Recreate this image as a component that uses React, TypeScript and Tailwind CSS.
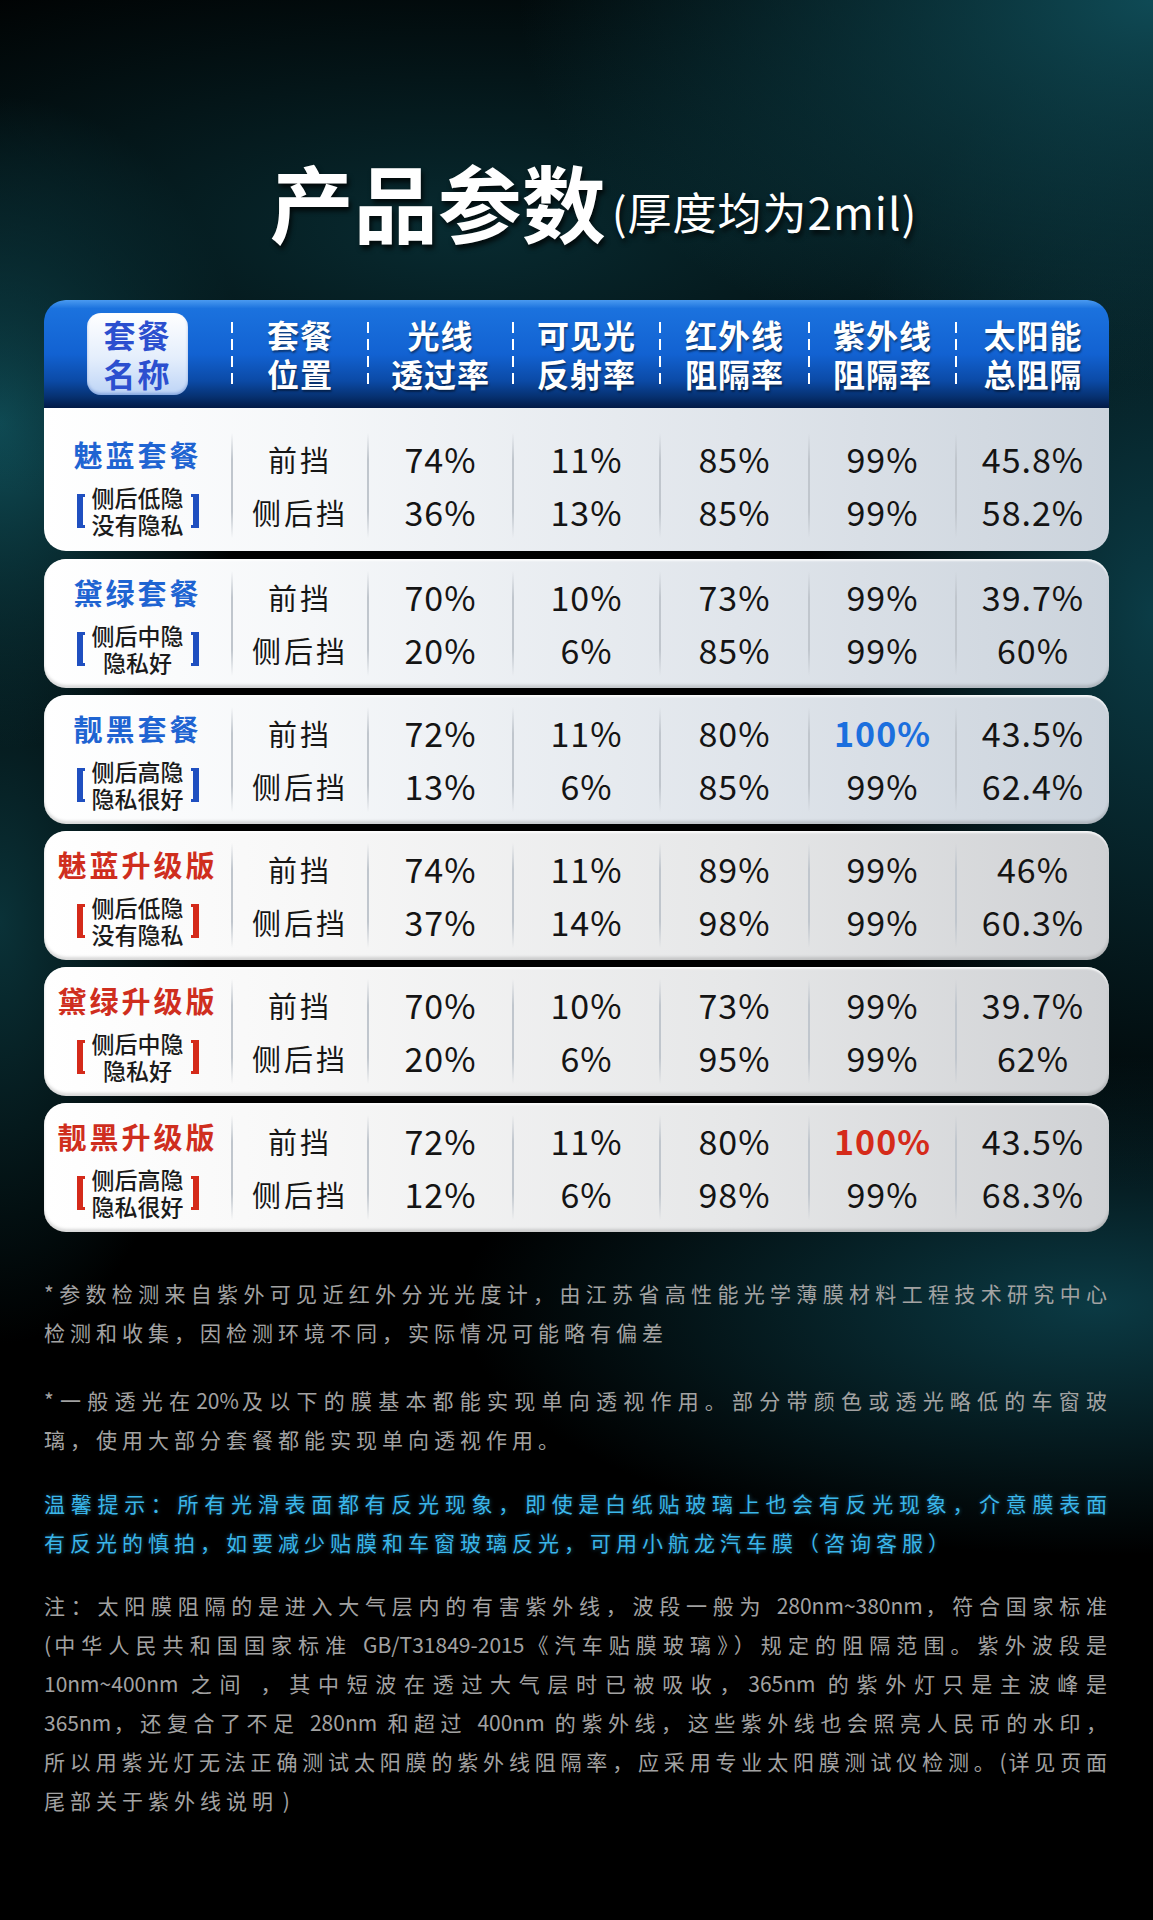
import React from "react";

type Row = {
  name: string;
  red: boolean;
  sub: [string, string];
  vals: [string, string][];
  hi?: number;
};

const rows: Row[] = [
  { name: "魅蓝套餐", red: false, sub: ["侧后低隐", "没有隐私"], vals: [["74%", "36%"], ["11%", "13%"], ["85%", "85%"], ["99%", "99%"], ["45.8%", "58.2%"]] },
  { name: "黛绿套餐", red: false, sub: ["侧后中隐", "隐私好"], vals: [["70%", "20%"], ["10%", "6%"], ["73%", "85%"], ["99%", "99%"], ["39.7%", "60%"]] },
  { name: "靓黑套餐", red: false, sub: ["侧后高隐", "隐私很好"], vals: [["72%", "13%"], ["11%", "6%"], ["80%", "85%"], ["100%", "99%"], ["43.5%", "62.4%"]], hi: 3 },
  { name: "魅蓝升级版", red: true, sub: ["侧后低隐", "没有隐私"], vals: [["74%", "37%"], ["11%", "14%"], ["89%", "98%"], ["99%", "99%"], ["46%", "60.3%"]] },
  { name: "黛绿升级版", red: true, sub: ["侧后中隐", "隐私好"], vals: [["70%", "20%"], ["10%", "6%"], ["73%", "95%"], ["99%", "99%"], ["39.7%", "62%"]] },
  { name: "靓黑升级版", red: true, sub: ["侧后高隐", "隐私很好"], vals: [["72%", "12%"], ["11%", "6%"], ["80%", "98%"], ["100%", "99%"], ["43.5%", "68.3%"]], hi: 3 },
];

const headers: [string, string][] = [
  ["套餐", "位置"],
  ["光线", "透过率"],
  ["可见光", "反射率"],
  ["红外线", "阻隔率"],
  ["紫外线", "阻隔率"],
  ["太阳能", "总阻隔"],
];

const GRID = "grid grid-cols-[187px_136px_145px_147px_149px_147px_154px]";

function Sep() {
  return (
    <div className="w-[2px] self-stretch my-[12px] bg-[linear-gradient(to_bottom,transparent,#c0c6cd_25%,#c0c6cd_75%,transparent)]" />
  );
}

function Cell({ a, b, hi, red, cjk }: { a: string; b: string; hi?: boolean; red?: boolean; cjk?: boolean }) {
  const size = cjk ? "text-[29px] tracking-[3px]" : "text-[34px] tracking-[1px]";
  const normal = cjk ? "text-[#161616]" : "text-[#141414]";
  const first = hi ? (red ? "font-bold text-[#d52b1a]" : "font-bold text-[#1b6fde]") : normal;
  return (
    <div className="flex">
      <Sep />
      <div className="flex-1 flex flex-col justify-center">
        <div className={`h-[53px] flex items-center justify-center leading-none ${size} ${first}`}>{a}</div>
        <div className={`h-[53px] flex items-center justify-center leading-none ${size} ${normal}`}>{b}</div>
      </div>
    </div>
  );
}

function NameCell({ r }: { r: Row }) {
  const color = r.red ? "text-[#cf2e1e]" : "text-[#1f64d2]";
  const br = r.red ? "border-[#d42a1a]" : "border-[#1f4fc0]";
  return (
    <div className="flex flex-col items-center justify-center">
      <div className={`text-[29px] leading-[40px] font-bold tracking-[3px] ${color}`}>{r.name}</div>
      <div className="mt-[10px] flex items-center gap-[7px]">
        <span className={`block w-[8px] h-[34px] border-l-[6px] border-t-[3px] border-b-[3px] ${br}`} />
        <div className="flex flex-col items-center text-[23px] leading-[27px] font-medium text-[#1b1b1b]">
          <span className="h-[27px]">{r.sub[0]}</span>
          <span className="h-[27px]">{r.sub[1]}</span>
        </div>
        <span className={`block w-[8px] h-[34px] border-r-[6px] border-t-[3px] border-b-[3px] ${br}`} />
      </div>
    </div>
  );
}

function RowBody({ r }: { r: Row }) {
  return (
    <>
      <NameCell r={r} />
      <Cell a="前挡" b="侧后挡" cjk />
      {r.vals.map((v, i) => (
        <Cell key={i} a={v[0]} b={v[1]} hi={r.hi === i} red={r.red} />
      ))}
    </>
  );
}

function J({ children }: { children: React.ReactNode }) {
  return <div className="text-justify [text-align-last:justify] tracking-[3px]">{children}</div>;
}
function L({ children }: { children: React.ReactNode }) {
  return <div className="tracking-[5px]">{children}</div>;
}
function N({ children }: { children: React.ReactNode }) {
  return <span className="tracking-[0px]">{children}</span>;
}

export default function App() {
  const blueBg =
    "bg-[linear-gradient(to_right,#ffffff_0%,#f5f7f9_25%,#e0e5eb_65%,#cbd3dc_100%)]";
  const redBg =
    "bg-[linear-gradient(to_right,#ffffff_0%,#f7f7f7_25%,#e6e7e8_65%,#cfd1d4_100%)]";
  return (
    <div className="w-[1153px] h-[1920px] overflow-hidden bg-black bg-[radial-gradient(55%_20%_at_100%_0%,#0f4a55_0%,transparent_100%),radial-gradient(75%_16%_at_40%_12%,#082b31_0%,transparent_100%),radial-gradient(22%_17%_at_0%_22%,#10505a_0%,transparent_100%),radial-gradient(30%_30%_at_100%_32%,#0b3c46_0%,transparent_100%),radial-gradient(55%_13%_at_95%_68%,#0b3a44_0%,transparent_100%),radial-gradient(18%_22%_at_0%_48%,#0a3238_0%,transparent_100%)] font-['Noto_Sans_CJK_SC',sans-serif]">
      {/* Title */}
      <div className="pt-[151px] flex justify-center items-end pl-[34px] text-white [text-shadow:2px_4px_5px_rgba(0,0,0,0.75)]">
        <div className="text-[84px] leading-[100px] font-bold">产品参数</div>
        <div className="text-[44px] leading-[44px] mb-[18px] ml-[6px] tracking-[1px]">(厚度均为2mil)</div>
      </div>

      {/* Table */}
      <div className="ml-[44px] w-[1065px] mt-[49px] flex flex-col">
        <div className="rounded-[22px] overflow-hidden shadow-[inset_0_-3px_3px_rgba(0,0,0,0.15)]">
          <div className={`${GRID} h-[108px] rounded-t-[20px] bg-[linear-gradient(to_bottom,#4a9af0_0%,#1b72de_8%,#1262d2_50%,#0b4aa6_75%,#06306f_90%,#021a46_100%)]`}>
            <div className="flex items-center justify-center">
              <div className="w-[101px] h-[82px] rounded-[14px] bg-[linear-gradient(to_bottom,#ffffff_0%,#e4eefc_55%,#bdd4f6_100%)] shadow-[inset_0_-2px_3px_rgba(30,80,180,0.35)] flex flex-col items-center justify-center text-[#2c4fcf] text-[32px] leading-[39px] font-bold tracking-[2px]">
                <span className="h-[39px]">套餐</span>
                <span className="h-[39px]">名称</span>
              </div>
            </div>
            {headers.map((h, i) => (
              <div key={i} className="flex items-center">
                <div className="w-[2px] h-[64px] bg-[repeating-linear-gradient(to_bottom,#ffffff_0px,#ffffff_11px,transparent_11px,transparent_17px)]" />
                <div className="flex-1 flex flex-col items-center text-white text-[32px] leading-[39px] font-bold tracking-[1px] [text-shadow:1px_2px_2px_rgba(0,0,0,0.45)]">
                  <span className="h-[39px]">{h[0]}</span>
                  <span className="h-[39px]">{h[1]}</span>
                </div>
              </div>
            ))}
          </div>
          <div className={`${GRID} h-[143px] pt-[13px] pb-[1px] ${blueBg}`}>
            <RowBody r={rows[0]} />
          </div>
        </div>

        <div className="mt-[8px] flex flex-col gap-[7px]">
          {rows.slice(1).map((r, i) => (
            <div
              key={i}
              className={`${GRID} h-[129px] rounded-[22px] shadow-[inset_0_-3px_3px_rgba(0,0,0,0.15),inset_0_2px_2px_rgba(255,255,255,0.8)] ${r.red ? redBg : blueBg}`}
            >
              <RowBody r={r} />
            </div>
          ))}
        </div>
      </div>

      {/* Notes */}
      <div className="ml-[44px] w-[1066px] mt-[42px] text-[21px] leading-[39px] text-[#a2a2a2]">
        <J>*参数检测来自紫外可见近红外分光光度计，由江苏省高性能光学薄膜材料工程技术研究中心</J>
        <L>检测和收集，因检测环境不同，实际情况可能略有偏差</L>

        <div className="mt-[29px]">
          <J>*一般透光在<N>20%</N>及以下的膜基本都能实现单向透视作用。部分带颜色或透光略低的车窗玻</J>
          <L>璃，使用大部分套餐都能实现单向透视作用。</L>
        </div>

        <div className="mt-[25px] text-[#3ab6ea] [text-shadow:0_0_4px_rgba(58,182,234,0.45)]">
          <J>温馨提示：所有光滑表面都有反光现象，即使是白纸贴玻璃上也会有反光现象，介意膜表面</J>
          <L>有反光的慎拍，如要减少贴膜和车窗玻璃反光，可用小航龙汽车膜（咨询客服）</L>
        </div>

        <div className="mt-[24px]">
          <J>注：太阳膜阻隔的是进入大气层内的有害紫外线，波段一般为 <N>280nm~380nm</N>，符合国家标准</J>
          <J><N>(</N>中华人民共和国国家标准 <N>GB/T31849-2015</N>《汽车贴膜玻璃》）规定的阻隔范围。紫外波段是</J>
          <J><N>10nm~400nm</N> 之间 ，其中短波在透过大气层时已被吸收，<N>365nm</N> 的紫外灯只是主波峰是</J>
          <J><N>365nm</N>，还复合了不足 <N>280nm</N> 和超过 <N>400nm</N> 的紫外线，这些紫外线也会照亮人民币的水印，</J>
          <J>所以用紫光灯无法正确测试太阳膜的紫外线阻隔率，应采用专业太阳膜测试仪检测。<N>(</N>详见页面</J>
          <L>尾部关于紫外线说明<N> )</N></L>
        </div>
      </div>
    </div>
  );
}
